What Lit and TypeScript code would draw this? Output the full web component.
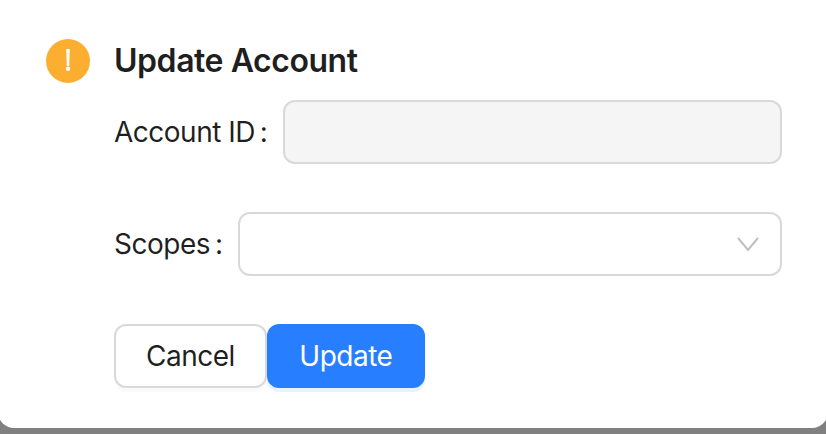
import { LitElement, html, css } from "lit";
import { customElement } from "lit/decorators.js";

@customElement("app-root")
export class AppRoot extends LitElement {
  static styles = css`
    :host {
      display: block;
      width: 826px;
      height: 434px;
      background: #808080;
      overflow: hidden;
      font-family: Inter, "Liberation Sans", sans-serif;
      color: rgba(0, 0, 0, 0.88);
    }
    .modal {
      box-sizing: border-box;
      width: 830px;
      height: 438px;
      margin: -10px -2px 0;
      padding: 49px 46px 0 48px;
      background: #fff;
      border-radius: 16px;
      display: flex;
      gap: 24px;
    }
    .icon { flex: none; width: 44px; height: 44px; display: block; }
    .main { flex: 1; min-width: 0; display: flex; flex-direction: column; }
    h1 { margin: 0 0 17px; font-size: 32px; letter-spacing: -0.45px; line-height: 44px; font-weight: 600; }
    .row { display: flex; align-items: center; height: 64px; margin-bottom: 48px; }
    label { font-size: 28px; letter-spacing: -0.5px; line-height: 44px; white-space: nowrap; display: flex; }
    .colon { margin: 0 16px 0 4.9px; }
    .field {
      flex: 1;
      box-sizing: border-box;
      height: 64px;
      border: 2px solid #d9d9d9;
      border-radius: 12px;
      background: #fff;
      display: flex;
      align-items: center;
      justify-content: flex-end;
      padding-right: 20px;
    }
    .field.disabled { background: #f5f5f5; }
    .buttons { display: flex; }
    button {
      box-sizing: border-box;
      height: 64px;
      padding: 0 30px;
      border-radius: 12px;
      border: 2px solid #d9d9d9;
      background: #fff;
      color: rgba(0, 0, 0, 0.88);
      font: 400 28px Inter, "Liberation Sans", sans-serif;
      letter-spacing: -0.5px;
      box-shadow: 0 4px 0 rgba(0, 0, 0, 0.02);
    }
    button.primary {
      padding: 0 30.5px;
      background: #277eff;
      border-color: #277eff;
      color: #fff;
      box-shadow: 0 4px 0 rgba(5, 145, 255, 0.1);
    }
  `;

  render() {
    return html`
      <div class="modal">
        <svg class="icon" viewBox="0 0 44 44">
          <circle cx="22" cy="22" r="22" fill="#fbae30"></circle>
          <path d="M20.2 10h3.6l-.6 17h-2.4z" fill="#fff"></path>
          <circle cx="22" cy="29.8" r="2.2" fill="#fff"></circle>
        </svg>
        <div class="main">
          <h1>Update Account</h1>
          <div class="row">
            <label>Account ID<span class="colon">:</span></label>
            <div class="field disabled"></div>
          </div>
          <div class="row">
            <label>Scopes<span class="colon">:</span></label>
            <div class="field">
              <svg width="24" height="16" viewBox="0 0 24 16" fill="none" stroke="#bfbfbf" stroke-width="2">
                <path d="M2 2l10 12L22 2"></path>
              </svg>
            </div>
          </div>
          <div class="buttons">
            <button>Cancel</button>
            <button class="primary">Update</button>
          </div>
        </div>
      </div>
    `;
  }
}
